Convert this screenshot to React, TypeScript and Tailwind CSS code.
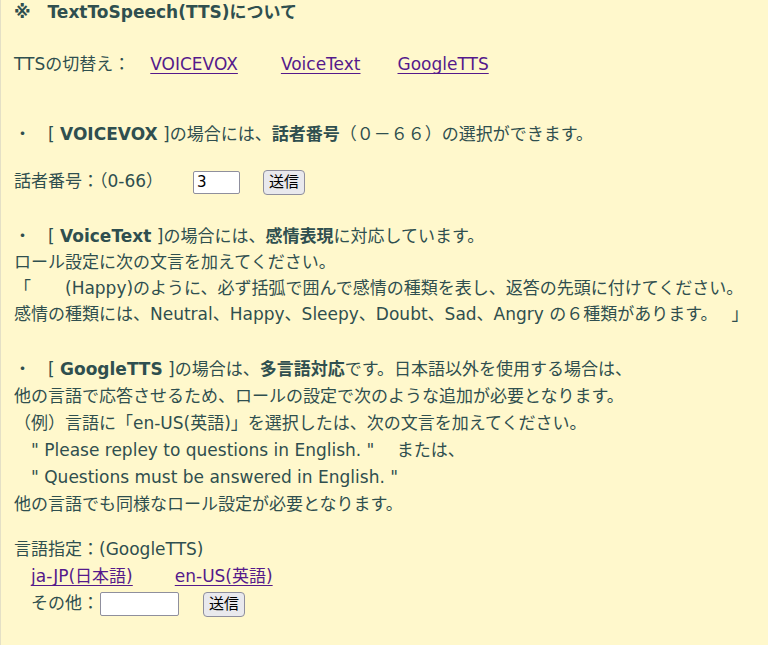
const linkCls = "text-[#551a8b] underline underline-offset-[3px] decoration-1";

const SendButton = () => (
  <button className="h-[25px] px-[5px] border border-[#8f8f9d] rounded-[4px] bg-[#e9e9ed] text-black text-[15px] leading-none">
    送信
  </button>
);

export default function App() {
  return (
    <div
      className="min-h-screen w-full bg-[#fff8cc] border-l border-[#e4e0c6] text-[#2f4f4f] text-[17px] pl-[13px]"
      style={{ fontFamily: '"DejaVu Sans", "Noto Sans CJK JP", sans-serif' }}
    >
      {/* title */}
      <div className="leading-[24px] font-bold whitespace-nowrap">※　TextToSpeech(TTS)について</div>

      {/* switch */}
      <div className="mt-[28px] flex items-center h-[26px] whitespace-nowrap">
        <span>TTSの切替え：</span>
        <a href="#" className={"ml-[20px] " + linkCls}>VOICEVOX</a>
        <a href="#" className={"ml-[43px] " + linkCls}>VoiceText</a>
        <a href="#" className={"ml-[37px] " + linkCls}>GoogleTTS</a>
      </div>

      {/* VOICEVOX */}
      <div className="mt-[43px] leading-[26px] whitespace-nowrap">
        ・　[ <b>VOICEVOX</b> ]の場合には、<b>話者番号</b>（０－６６）の選択ができます。
      </div>
      <div className="mt-[22px] flex items-center h-[26px] whitespace-nowrap">
        <span>話者番号：（0-66）</span>
        <input
          defaultValue="3"
          className="ml-[30px] w-[47px] h-[23px] border border-[#8f8f9d] rounded-[2px] bg-white px-[3px] text-black text-[15px] outline-none"
        />
        <span className="ml-[23px]">
          <SendButton />
        </span>
      </div>

      {/* VoiceText */}
      <div className="mt-[28px] leading-[26px] whitespace-nowrap">
        <div>・　[ <b>VoiceText</b> ]の場合には、<b>感情表現</b>に対応しています。</div>
        <div>ロール設定に次の文言を加えてください。</div>
        <div>「　　(Happy)のように、必ず括弧で囲んで感情の種類を表し、返答の先頭に付けてください。</div>
        <div>感情の種類には、Neutral、Happy、Sleepy、Doubt、Sad、Angry の６種類があります。　 」</div>
      </div>

      {/* GoogleTTS */}
      <div className="mt-[29px] leading-[27px] whitespace-nowrap">
        <div>・　[ <b>GoogleTTS</b> ]の場合は、<b>多言語対応</b>です。日本語以外を使用する場合は、</div>
        <div>他の言語で応答させるため、ロールの設定で次のような追加が必要となります。</div>
        <div>（例）言語に「en-US(英語)」を選択したは、次の文言を加えてください。</div>
        <div className="pl-[17px]">" Please repley to questions in English. "　 または、</div>
        <div className="pl-[17px]">" Questions must be answered in English. "</div>
        <div>他の言語でも同様なロール設定が必要となります。</div>
      </div>

      {/* language */}
      <div className="mt-[18px] leading-[27px] whitespace-nowrap">
        <div>言語指定：(GoogleTTS)</div>
        <div className="pl-[17px]">
          <a href="#" className={linkCls}>ja-JP(日本語)</a>
          <a href="#" className={"ml-[42px] " + linkCls}>en-US(英語)</a>
        </div>
        <div className="pl-[17px] flex items-center h-[27px]">
          <span>その他：</span>
          <input className="ml-[1px] w-[79px] h-[24px] border border-[#8f8f9d] rounded-[2px] bg-white px-[3px] text-black outline-none" />
          <span className="ml-[24px]">
            <SendButton />
          </span>
        </div>
      </div>
    </div>
  );
}
